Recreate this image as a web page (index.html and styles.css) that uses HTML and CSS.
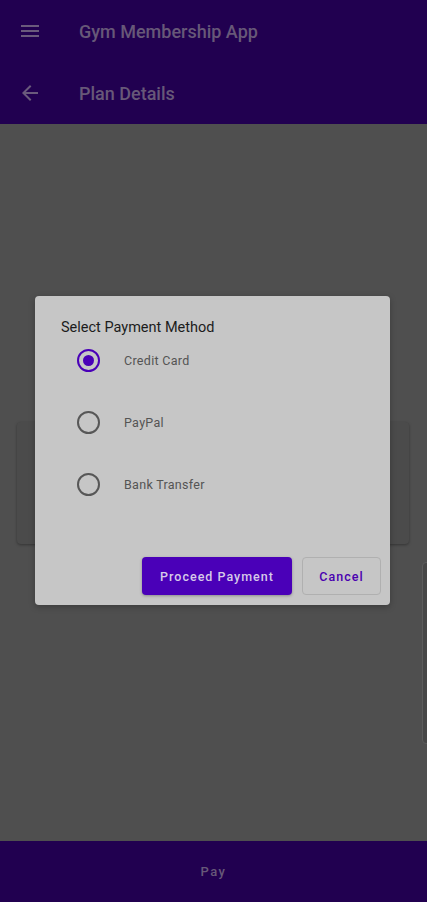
FILE: index.html
```html
<!DOCTYPE html>
<html>
<head>
<meta charset="utf-8">
<link rel="stylesheet" href="styles.css">
</head>
<body>
<div class="app">
  <header class="bar">
    <svg class="icon" viewBox="0 0 24 24" width="24" height="24"><path d="M3 18h18v-2H3v2zm0-5h18v-2H3v2zm0-7v2h18V6H3z" fill="#6a5a7c"/></svg>
    <span class="bar-title">Gym Membership App</span>
  </header>
  <header class="bar">
    <svg class="icon" viewBox="0 0 24 24" width="24" height="24"><path d="M20 11H7.83l5.59-5.59L12 4l-8 8 8 8 1.41-1.41L7.83 13H20v-2z" fill="#6a5a7c"/></svg>
    <span class="bar-title">Plan Details</span>
  </header>
  <main class="content">
    <div class="card"></div>
    <div class="edge-card"></div>
  </main>
  <footer class="pay-bar">Pay</footer>

  <div class="dialog">
    <div class="dialog-title">Select Payment Method</div>
    <div class="options">
      <div class="option"><span class="radio checked"></span><span class="label">Credit Card</span></div>
      <div class="option"><span class="radio"></span><span class="label">PayPal</span></div>
      <div class="option"><span class="radio"></span><span class="label">Bank Transfer</span></div>
    </div>
    <div class="actions">
      <button class="btn primary">Proceed Payment</button>
      <button class="btn outline">Cancel</button>
    </div>
  </div>
</div>
</body>
</html>
```
FILE: styles.css
```css
* { box-sizing: border-box; }
html, body { margin: 0; padding: 0; }
body {
  font-family: Roboto, "Noto Sans", "Liberation Sans", sans-serif;
  background: #4f4f4f;
}
.app {
  position: relative;
  width: 427px;
  height: 902px;
  display: flex;
  flex-direction: column;
  overflow: hidden;
}
.bar {
  height: 62px;
  flex: none;
  background: #210050;
  display: flex;
  align-items: center;
  padding-left: 18px;
}
.bar .icon { flex: none; }
.bar-title {
  margin-left: 37px;
  font-size: 18px;
  font-weight: 500;
  color: #675878;
}
.content {
  position: relative;
  flex: 1;
  background: #4f4f4f;
  padding: 298px 18px 0 17px;
}
.card {
  height: 122px;
  background: #4b4b4b;
  border-radius: 4px;
  box-shadow: 0 1px 3px rgba(0,0,0,0.35);
}
.edge-card {
  position: absolute;
  left: 422px;
  top: 438px;
  width: 20px;
  height: 182px;
  background: #474747;
  border: 1px solid #5c5c5c;
  border-radius: 4px;
}
.pay-bar {
  height: 61px;
  flex: none;
  background: #210050;
  display: flex;
  align-items: center;
  justify-content: center;
  font-size: 13px;
  font-weight: 500;
  letter-spacing: 1.5px;
  color: #675878;
  box-shadow: 0 -1px 2px rgba(0,0,0,0.3);
}
.dialog {
  position: absolute;
  left: 35px;
  top: 296px;
  width: 355px;
  height: 309px;
  background: #c6c6c6;
  border-radius: 4px;
  display: flex;
  flex-direction: column;
  padding: 23px 9px 10px 26px;
  box-shadow: 0 2px 6px rgba(0,0,0,0.25);
}
.dialog-title {
  font-size: 14.5px;
  line-height: 18px;
  color: #1c1c1c;
  height: 18px;
}
.options {
  display: flex;
  flex-direction: column;
  gap: 16px;
}
.option {
  height: 46px;
  display: flex;
  align-items: center;
  padding-left: 16px;
}
.radio {
  width: 23px;
  height: 23px;
  border: 2px solid #575757;
  border-radius: 50%;
  position: relative;
  flex: none;
}
.radio.checked { border-color: #4a00b8; }
.radio.checked::after {
  content: "";
  position: absolute;
  left: 4px;
  top: 4px;
  width: 11px;
  height: 11px;
  border-radius: 50%;
  background: #4a00b8;
}
.label {
  margin-left: 24px;
  font-size: 12.5px;
  letter-spacing: 0.3px;
  color: #545454;
}
.actions {
  margin-top: auto;
  display: flex;
  justify-content: flex-end;
  gap: 10px;
}
.btn {
  height: 38px;
  border-radius: 4px;
  font-family: Roboto, "Noto Sans", "Liberation Sans", sans-serif;
  font-size: 12.5px;
  font-weight: 500;
  letter-spacing: 1px;
  padding: 0;
  cursor: pointer;
}
.btn.primary {
  width: 150px;
  background: #4a00b8;
  color: #d6cae8;
  border: none;
  box-shadow: 0 1px 3px rgba(0,0,0,0.3);
}
.btn.outline {
  width: 79px;
  background: transparent;
  color: #4a00b0;
  border: 1px solid #b0b0b0;
}
```
